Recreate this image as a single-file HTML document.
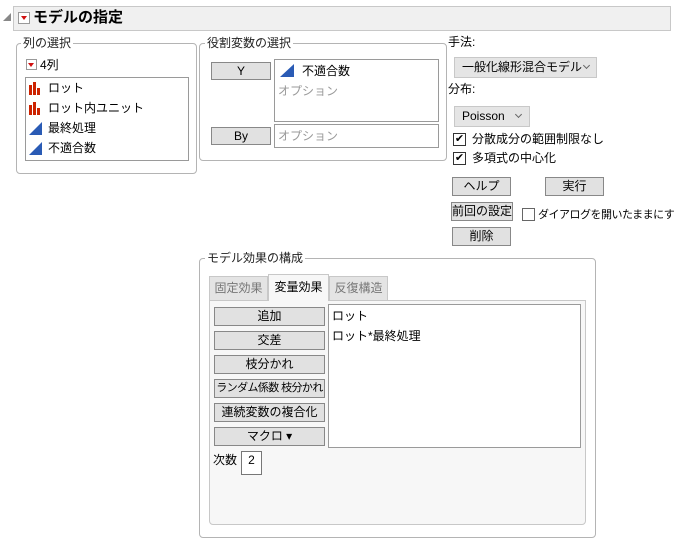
<!DOCTYPE html>
<html><head><meta charset="utf-8"><style>
*{box-sizing:border-box;margin:0;padding:0}
body{width:674px;height:540px;background:#fff;position:relative;overflow:hidden;font-family:"Liberation Sans","Noto Sans CJK JP",sans-serif;font-size:12px;color:#000;white-space:nowrap}
.a{position:absolute}
.grp{position:absolute;border:1px solid #b4b4b4;border-radius:4px}
.leg{position:absolute;background:#fff;padding:0 2px;font-size:12px;line-height:14px;color:#222}
.box{position:absolute;background:#fff;border:1px solid #9a9a9a}
.btn{position:absolute;background:#e1e1e1;border:1px solid #888;text-align:center;font-size:12px;line-height:16px;overflow:hidden}
.dd{position:absolute;background:#e5e5e5;border:1px solid #c8c8c8;font-size:12px;line-height:19px;padding-left:7px}
.chev{position:absolute;top:7px;width:5px;height:5px;border-right:1px solid #666;border-bottom:1px solid #666;transform:rotate(45deg)}
.cb{position:absolute;width:13px;height:13px;border:1px solid #333;background:#fff;font-size:11px;line-height:11px;text-align:center}
.ti{position:absolute;font-size:12px;line-height:14px}
</style></head><body>
<div class="a" style="left:3px;top:13px;width:0;height:0;border-left:8px solid transparent;border-bottom:8px solid #888"></div>
<div class="a" style="left:13px;top:6px;width:658px;height:25px;background:#f0f0f0;border:1px solid #c8c8c8"></div>
<div class="a" style="left:18px;top:12px;width:12px;height:12px;background:#fff;border:1px solid #999"><div class="a" style="left:2px;top:3px;border-left:3px solid transparent;border-right:3px solid transparent;border-top:4px solid #d01010"></div></div>
<div class="a" style="left:33px;top:9px;font-size:15px;font-weight:bold;line-height:18px">モデルの指定</div>

<div class="grp" style="left:16px;top:43px;width:181px;height:131px"></div>
<div class="leg" style="left:21px;top:36px">列の選択</div>
<div class="a" style="left:26px;top:59px;width:11px;height:11px;background:#fff;border:1px solid #999"><div class="a" style="left:1px;top:3px;border-left:3.5px solid transparent;border-right:3.5px solid transparent;border-top:4px solid #d01010"></div></div>
<div class="ti" style="left:40px;top:58px">4列</div>
<div class="box" style="left:25px;top:77px;width:164px;height:84px"></div>
<svg class="a" style="left:28px;top:81px" width="16" height="76">
<g fill="#cc2200"><rect x="1" y="4" width="3" height="10"/><rect x="5" y="1" width="3" height="13"/><rect x="9" y="7" width="3" height="7"/><rect x="1" y="24" width="3" height="10"/><rect x="5" y="21" width="3" height="13"/><rect x="9" y="27" width="3" height="7"/></g>
<polygon points="1,54 14,41 14,54" fill="#2a5bb5"/><polygon points="1,74 14,61 14,74" fill="#2a5bb5"/></svg>
<div class="ti" style="left:48px;top:81px">ロット</div>
<div class="ti" style="left:48px;top:101px">ロット内ユニット</div>
<div class="ti" style="left:48px;top:121px">最終処理</div>
<div class="ti" style="left:48px;top:141px">不適合数</div>

<div class="grp" style="left:199px;top:43px;width:248px;height:118px"></div>
<div class="leg" style="left:205px;top:36px">役割変数の選択</div>
<div class="btn" style="left:211px;top:62px;width:60px;height:18px">Y</div>
<div class="box" style="left:274px;top:59px;width:165px;height:63px"></div>
<svg class="a" style="left:279px;top:63px" width="16" height="15"><polygon points="1,14 15,1 15,14" fill="#2a5bb5"/></svg>
<div class="ti" style="left:302px;top:64px">不適合数</div>
<div class="ti" style="left:278px;top:84px;color:#999">オプション</div>
<div class="btn" style="left:211px;top:127px;width:60px;height:18px">By</div>
<div class="box" style="left:274px;top:124px;width:165px;height:24px"></div>
<div class="ti" style="left:278px;top:129px;color:#999">オプション</div>

<div class="ti" style="left:448px;top:35px">手法:</div>
<div class="dd" style="left:454px;top:57px;width:143px;height:21px">一般化線形混合モデル<div class="chev" style="left:129px;top:5px"></div></div>
<div class="ti" style="left:448px;top:82px">分布:</div>
<div class="dd" style="left:454px;top:106px;width:76px;height:21px">Poisson<div class="chev" style="left:61px;top:5px"></div></div>
<div class="cb" style="left:453px;top:133px">✔</div><div class="ti" style="left:472px;top:132px">分散成分の範囲制限なし</div>
<div class="cb" style="left:453px;top:152px">✔</div><div class="ti" style="left:472px;top:151px">多項式の中心化</div>
<div class="btn" style="left:452px;top:177px;width:59px;height:19px">ヘルプ</div>
<div class="btn" style="left:545px;top:177px;width:59px;height:19px">実行</div>
<div class="btn" style="left:451px;top:202px;width:62px;height:19px">前回の設定</div>
<div class="cb" style="left:522px;top:208px;border-color:#666"></div><div class="ti" style="left:538px;top:208px;font-size:11px;letter-spacing:-0.5px">ダイアログを開いたままにする</div>
<div class="btn" style="left:452px;top:227px;width:59px;height:19px">削除</div>

<div class="grp" style="left:199px;top:258px;width:397px;height:280px"></div>
<div class="leg" style="left:205px;top:251px">モデル効果の構成</div>
<div class="a" style="left:209px;top:300px;width:377px;height:225px;background:#f7f7f7;border:1px solid #c8c8c8;border-radius:0 0 4px 4px"></div>
<div class="a" style="left:209px;top:276px;width:59px;height:25px;background:#e4e4e4;border:1px solid #c8c8c8;color:#777;text-align:center;line-height:22px">固定効果</div>
<div class="a" style="left:268px;top:274px;width:61px;height:27px;background:#f7f7f7;border:1px solid #c8c8c8;border-bottom:none;text-align:center;line-height:24px">変量効果</div>
<div class="a" style="left:329px;top:276px;width:59px;height:25px;background:#e4e4e4;border:1px solid #c8c8c8;color:#777;text-align:center;line-height:22px">反復構造</div>
<div class="btn" style="left:214px;top:307px;width:111px;height:19px">追加</div>
<div class="btn" style="left:214px;top:331px;width:111px;height:19px">交差</div>
<div class="btn" style="left:214px;top:355px;width:111px;height:19px">枝分かれ</div>
<div class="btn" style="left:214px;top:379px;width:111px;height:19px;font-size:11px;letter-spacing:-0.6px">ランダム係数 枝分かれ</div>
<div class="btn" style="left:214px;top:403px;width:111px;height:19px">連続変数の複合化</div>
<div class="btn" style="left:214px;top:427px;width:111px;height:19px">マクロ ▾</div>
<div class="box" style="left:328px;top:304px;width:253px;height:144px"></div>
<div class="ti" style="left:332px;top:309px">ロット</div>
<div class="ti" style="left:332px;top:329px">ロット*最終処理</div>
<div class="ti" style="left:213px;top:453px">次数</div>
<div class="box" style="left:241px;top:451px;width:21px;height:24px;border-color:#777;text-align:center;line-height:16px">2</div>
</body></html>
